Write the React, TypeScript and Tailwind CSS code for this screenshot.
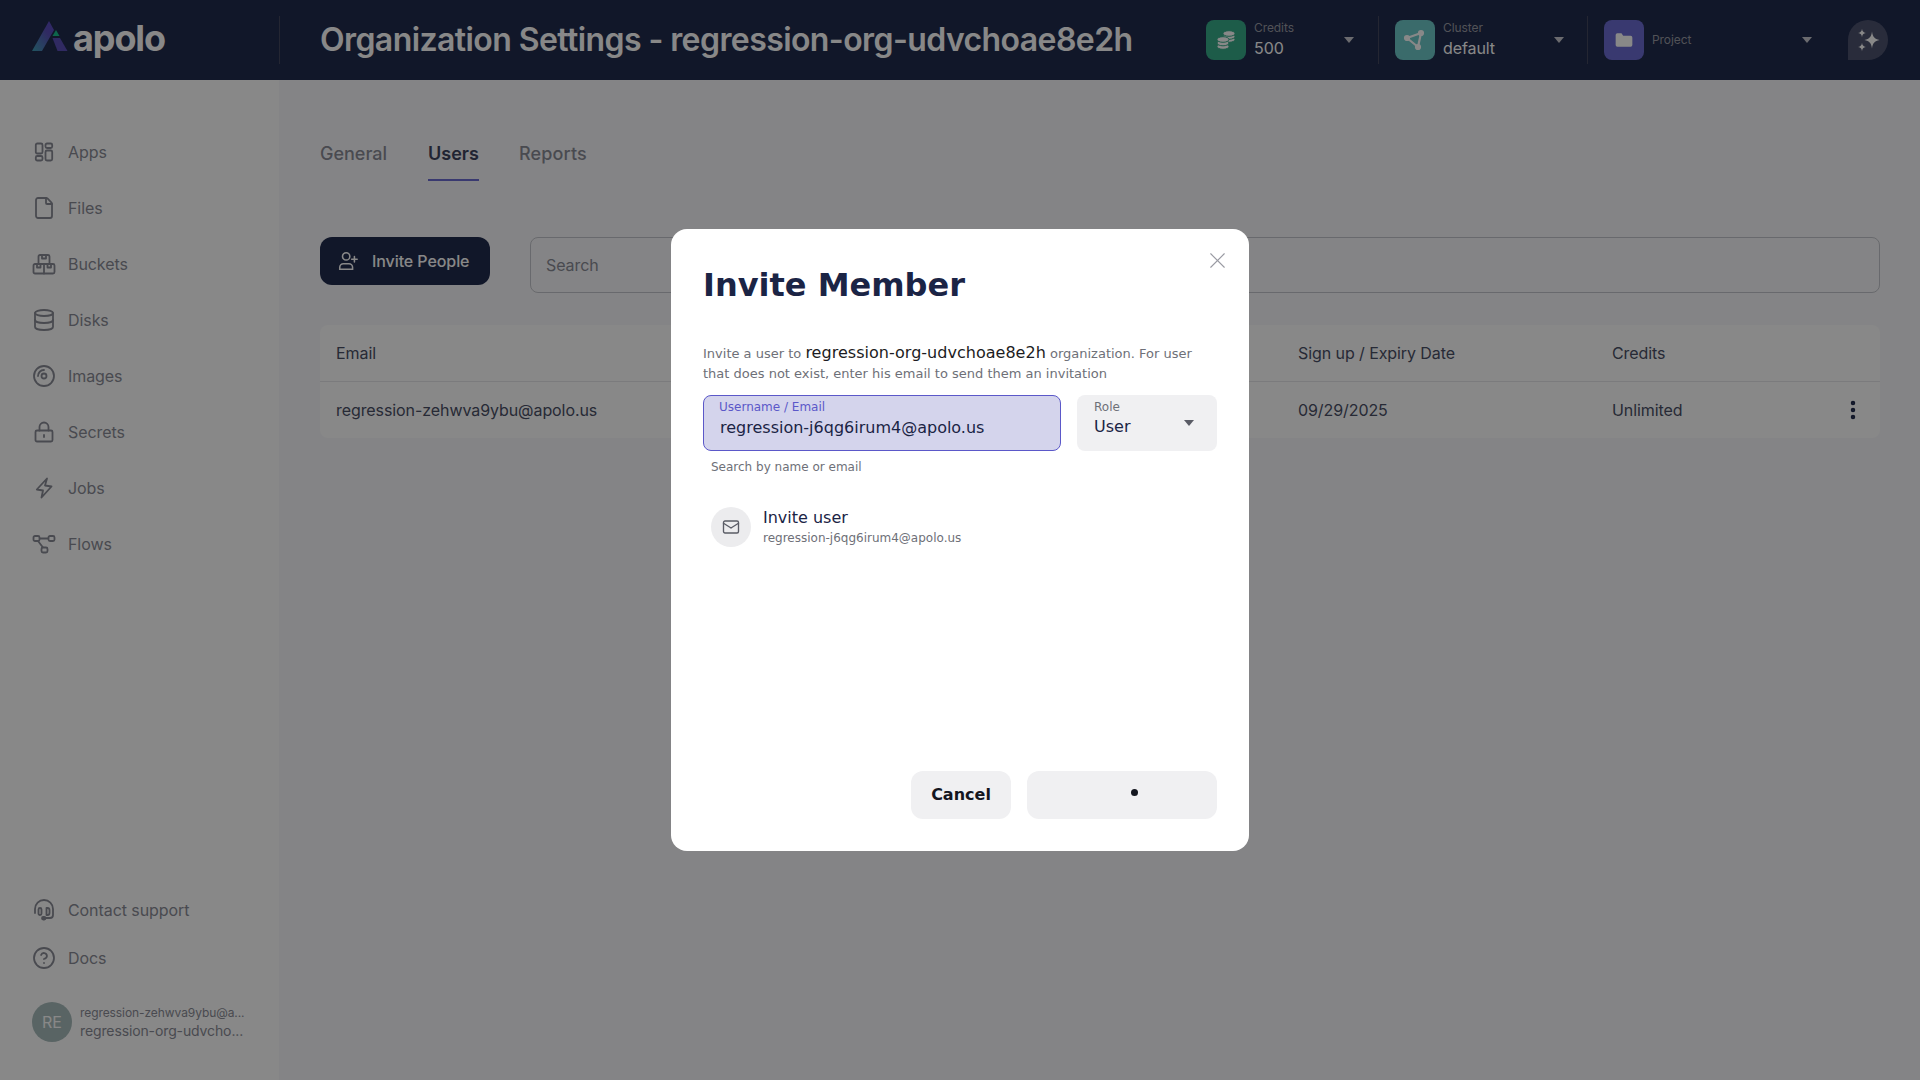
import React from "react";
import { CircleHelp, Database, EllipsisVertical, File, Mail, X } from "lucide-react";

function AppsIcon() {
  return (
    <svg width="24" height="24" viewBox="0 0 24 24" fill="none" stroke="currentColor" strokeWidth="1.8" strokeLinejoin="round">
      <rect x="3.800" y="3.500" width="6.700" height="10" rx="1.500" />
      <rect x="3.800" y="16" width="6.700" height="4.500" rx="1.500" />
      <rect x="13.500" y="3.500" width="6.700" height="4.500" rx="1.500" />
      <rect x="13.500" y="10.500" width="6.700" height="10" rx="1.500" />
    </svg>
  );
}

function BucketsIcon() {
  return (
    <svg width="24" height="24" viewBox="0 0 24 24" fill="none" stroke="currentColor" strokeWidth="1.8" strokeLinecap="round" strokeLinejoin="round">
      <path d="M6.500 12V4.500A1.500 1.500 0 0 1 8 3h8a1.500 1.500 0 0 1 1.500 1.500V12" />
      <path d="M10 3v3.500h4V3" />
      <path d="M1.500 13.500A1.500 1.500 0 0 1 3 12h9v9.500H3a1.500 1.500 0 0 1-1.500-1.500z" />
      <path d="M12 12h9a1.500 1.500 0 0 1 1.500 1.500V20a1.500 1.500 0 0 1-1.500 1.500h-9" />
      <path d="M5 12v3.500h3.500V12M15.500 12v3.500H19V12" />
    </svg>
  );
}

function ImagesIcon() {
  return (
    <svg width="24" height="24" viewBox="0 0 24 24" fill="none" stroke="currentColor" strokeWidth="1.8" strokeLinecap="round">
      <circle cx="12" cy="12" r="10" />
      <circle cx="12" cy="12" r="2.500" />
      <path d="M6 12a6 6 0 0 1 6-6" />
    </svg>
  );
}

function LockIcon() {
  return (
    <svg width="24" height="24" viewBox="0 0 24 24" fill="none" stroke="currentColor" strokeWidth="1.8" strokeLinecap="round" strokeLinejoin="round">
      <rect x="3.500" y="10.500" width="17" height="11" rx="1.500" />
      <path d="M7.500 10.500V7a4.500 4.500 0 0 1 9 0v3.500M12 15v2" />
    </svg>
  );
}

function BoltIcon() {
  return (
    <svg width="24" height="24" viewBox="0 0 24 24" fill="none" stroke="currentColor" strokeWidth="1.8" strokeLinejoin="round">
      <path d="M15 2.500L13 9.500L19.500 10.500L9.500 21.500L11 14.500L4.800 13.500Z" />
    </svg>
  );
}

function FlowsIcon() {
  return (
    <svg width="24" height="24" viewBox="0 0 24 24" fill="none" stroke="currentColor" strokeWidth="1.8" strokeLinejoin="round">
      <rect x="1.500" y="4" width="6" height="5" rx="1.500" />
      <rect x="16.500" y="4" width="6" height="5" rx="1.500" />
      <rect x="9.500" y="15.500" width="6" height="5" rx="1.500" />
      <path d="M7.500 6.500h9M6 9l5 6.500" />
    </svg>
  );
}

function SupportIcon() {
  return (
    <svg width="24" height="24" viewBox="0 0 24 24" fill="none" stroke="currentColor" strokeWidth="1.8" strokeLinecap="round" strokeLinejoin="round">
      <path d="M3 15v-4a9 9 0 0 1 18 0v6a3 3 0 0 1-3 3h-5" />
      <rect x="6.500" y="10" width="3" height="7" rx="1.500" />
      <path d="M14.500 10h1a2 2 0 0 1 2 2v3a2 2 0 0 1-2 2h-1z" />
      <rect x="10" y="19" width="3.500" height="2.500" rx="1.200" fill="currentColor" />
    </svg>
  );
}

function CoinsIcon() {
  return (
    <svg width="24" height="24" viewBox="0 0 24 24" fill="white" stroke="#38ac8a" strokeWidth="1">
      <ellipse cx="15" cy="11.500" rx="6" ry="2.800" />
      <ellipse cx="15" cy="8.500" rx="6" ry="2.800" />
      <ellipse cx="15" cy="5.500" rx="6" ry="2.800" />
      <ellipse cx="9" cy="18.500" rx="6" ry="2.800" />
      <ellipse cx="9" cy="15" rx="6" ry="2.800" />
      <ellipse cx="9" cy="11.500" rx="6" ry="2.800" />
    </svg>
  );
}

function ClusterIcon() {
  return (
    <svg width="24" height="24" viewBox="0 0 24 24" fill="white" stroke="white" strokeWidth="2.200" strokeLinejoin="round">
      <path d="M4 10L18 5L15 19Z" fill="none" />
      <circle cx="4" cy="10" r="2" />
      <circle cx="18" cy="5" r="2" />
      <circle cx="15" cy="19" r="2" />
    </svg>
  );
}

function SparkIcon() {
  return (
    <svg width="24" height="24" viewBox="0 0 24 24" fill="white">
      <path d="M16 3.500c.6 5 2.500 7.600 7.500 8.500-5 .9-6.900 3.500-7.500 8.500-.6-5-2.500-7.600-7.500-8.500 5-.9 6.900-3.500 7.500-8.500z" />
      <path d="M6 .8c.3 2.500 1.300 3.700 3.800 4.200-2.500.5-3.500 1.700-3.800 4.200-.3-2.500-1.300-3.700-3.800-4.200 2.500-.5 3.500-1.700 3.800-4.200z" />
      <path d="M6 14.800c.3 2.500 1.300 3.700 3.800 4.200-2.500.5-3.500 1.700-3.800 4.200-.3-2.500-1.300-3.700-3.800-4.200 2.500-.5 3.500-1.700 3.800-4.200z" />
    </svg>
  );
}

function Logo() {
  return (
    <div className="flex items-center">
      <svg width="36" height="30" viewBox="0 0 36 30" className="mb-[8px]">
        <defs>
          <linearGradient id="apolo-a" x1="0" y1="1" x2="1" y2="0">
            <stop offset="0" stopColor="#3f9fb4" />
            <stop offset="0.65" stopColor="#5a4fb8" />
            <stop offset="1" stopColor="#5c4ac4" />
          </linearGradient>
        </defs>
        <path d="M17 0L22 9L10 30H0Z" fill="url(#apolo-a)" />
        <path d="M20.500 17H28L35.500 30H25.500Z" fill="#5a4fb8" />
        <path d="M24 9L27.500 15H20.500Z" fill="#1bc08f" />
      </svg>
      <span className="mb-[4px] ml-[5px] text-[36px] leading-none font-bold tracking-[-1.100px] text-white">apolo</span>
    </div>
  );
}

function Selector({ color, icon, label, value, width, caret, last }: { color: string; icon: React.ReactNode; label: string; value?: string; width: string; caret: string; last?: boolean }) {
  return (
    <div className={`flex h-full items-center ${width}`}>
      <div className={`flex h-10 w-10 shrink-0 items-center justify-center rounded-lg ${color}`}>{icon}</div>
      <div className="ml-2 flex flex-col justify-center">
        <span className="text-xs leading-[16px] text-[#9a9ba3]">{label}</span>
        {value && <span className="text-base leading-[24px] text-white">{value}</span>}
      </div>
      <span className={`ml-auto h-0 w-0 border-x-[5px] border-t-[6px] border-x-transparent border-t-[#c8c9d0] ${caret}`} />
      {!last && <span className="h-12 w-px bg-[#45485f]" />}
    </div>
  );
}

const navItems = [
  { label: "Apps", icon: <AppsIcon /> },
  { label: "Files", icon: <File size={24} strokeWidth={1.8} /> },
  { label: "Buckets", icon: <BucketsIcon /> },
  { label: "Disks", icon: <Database size={24} strokeWidth={1.8} /> },
  { label: "Images", icon: <ImagesIcon /> },
  { label: "Secrets", icon: <LockIcon /> },
  { label: "Jobs", icon: <BoltIcon /> },
  { label: "Flows", icon: <FlowsIcon /> },
];

function NavItem({ label, icon, height }: { label: string; icon: React.ReactNode; height: string }) {
  return (
    <div className={`flex items-center gap-3 text-base text-[#8a8c96] ${height}`}>
      <span className="flex h-6 w-6 items-center justify-center">{icon}</span>
      <span>{label}</span>
    </div>
  );
}

function InviteDialog() {
  return (
    <div className="fixed inset-0 flex items-center justify-center bg-black/[.465]">
      <div className="relative flex h-[622px] w-[578px] flex-col rounded-2xl bg-white px-8 pt-[33px] pb-8 tracking-normal [font-family:'DejaVu_Sans',sans-serif]">
        <X size={27} strokeWidth={1} className="absolute top-[18px] right-[18px] text-[#9a9ba3]" />
        <h2 className="text-[32px] leading-[46px] font-bold text-[#1b2445]">Invite Member</h2>
        <p className="mt-[36px] text-[13px] leading-[20px] text-[#6e7078]">
          Invite a user to <span className="text-base leading-none tracking-[0.02px] text-[#1c1c22]">regression-org-udvchoae8e2h</span> organization. For user that does not exist, enter his email to send them an invitation
        </p>
        <div className="mt-[11px] flex gap-4">
          <label className="flex h-14 w-[358px] flex-col rounded-lg border border-[#5b58c9] bg-[#d4d4ec] px-[15px] pt-[3px]">
            <span className="text-xs leading-[16px] text-[#5b58c9]">Username / Email</span>
            <input readOnly value="regression-j6qg6irum4@apolo.us" className="mt-[1px] w-full bg-transparent pl-[1px] text-base leading-[24px] text-[#1b2445] outline-none" />
          </label>
          <div className="relative flex h-14 w-[140px] flex-col rounded-lg bg-[#f0f0f2] px-[17px] pt-[4px]">
            <span className="text-xs leading-[16px] text-[#6e7078]">Role</span>
            <span className="text-base leading-[24px] text-[#1b2445]">User</span>
            <span className="absolute top-[25px] right-[23px] h-0 w-0 border-x-[5.500px] border-t-[6px] border-x-transparent border-t-[#5a5c66]" />
          </div>
        </div>
        <p className="mt-[8px] ml-2 text-xs leading-[16px] text-[#6e7078]">Search by name or email</p>
        <div className="mt-[32px] ml-2 flex items-center gap-3">
          <div className="flex h-10 w-10 items-center justify-center rounded-full bg-[#ececee]">
            <Mail size={18} strokeWidth={1.8} className="text-[#5a5c66]" />
          </div>
          <div className="flex flex-col">
            <span className="text-base leading-[22px] text-[#1b2445]">Invite user</span>
            <span className="text-xs leading-[18px] text-[#6e7078]">regression-j6qg6irum4@apolo.us</span>
          </div>
        </div>
        <div className="mt-auto flex justify-end gap-4">
          <button className="h-12 w-[100px] rounded-xl bg-[#f0f0f2] text-base font-bold text-[#14161f]">Cancel</button>
          <button className="flex h-12 w-[190px] items-start justify-center rounded-xl bg-[#f0f0f2] pt-[18px] pl-[24px]">
            <span className="h-[7px] w-[7px] rounded-full bg-[#14161f]" />
          </button>
        </div>
      </div>
    </div>
  );
}

export default function App() {
  return (
    <div className="flex h-screen w-full flex-col overflow-hidden bg-white font-[Inter,sans-serif] tracking-[-0.08px]">
      <header className="flex h-20 shrink-0 items-center bg-[#202b4d]">
        <div className="flex h-12 w-[280px] shrink-0 items-center border-r border-[#45485f] pl-8">
          <Logo />
        </div>
        <h1 className="ml-10 w-[886px] shrink-0 text-[32px] leading-none font-semibold tracking-[-0.58px] whitespace-nowrap text-white">Organization Settings - regression-org-udvchoae8e2h</h1>
        <Selector width="w-[173px]" caret="mr-[24px]" color="bg-[#38ac8a]" label="Credits" value="500" icon={<CoinsIcon />} />
        <div className="w-4" />
        <Selector width="w-[193px]" caret="mr-[23px]" color="bg-[#6dc8c8]" label="Cluster" value="default" icon={<ClusterIcon />} />
        <div className="w-4" />
        <Selector width="w-[220px]" caret="mr-[12px]" last color="bg-[#6c6cd2]" label="Project" icon={
          <svg width="20" height="20" viewBox="0 0 24 24" fill="white"><path d="M2 6a2 2 0 0 1 2-2h5l2 3h9a2 2 0 0 1 2 2v9a2 2 0 0 1-2 2H4a2 2 0 0 1-2-2z" /></svg>
        } />
        <div className="ml-6 flex h-10 w-10 items-center justify-center rounded-t-full rounded-br-full bg-[#4e5470]">
          <SparkIcon />
        </div>
      </header>

      <div className="flex min-h-0 flex-1">
        <aside className="flex w-[279px] shrink-0 flex-col bg-white pt-[44px] pb-[38px] pl-8">
          {navItems.map((item) => (
            <NavItem key={item.label} label={item.label} icon={item.icon} height="h-14" />
          ))}
          <div className="mt-auto">
            <NavItem label="Contact support" icon={<SupportIcon />} height="h-12" />
            <NavItem label="Docs" icon={<CircleHelp size={24} strokeWidth={1.8} />} height="h-12" />
            <div className="mt-5 flex items-center gap-2">
              <div className="flex h-10 w-10 items-center justify-center rounded-full bg-[#a8bcbc] text-base text-white">RE</div>
              <div className="flex flex-col text-[#8a8c96]">
                <span className="text-xs leading-[18px]">regression-zehwva9ybu@a...</span>
                <span className="text-sm leading-[18px] tracking-[-0.12px]">regression-org-udvcho...</span>
              </div>
            </div>
          </div>
        </aside>

        <main className="flex-1 bg-[#f8f8fb] pt-[45px] pr-10 pl-[41px]">
          <div className="flex gap-10 text-lg font-medium tracking-normal text-[#8a8c96]">
            <span className="h-[56px] pt-4 pr-[1px] leading-[26px]">General</span>
            <span className="h-[56px] border-b-2 border-[#6c6cd2] pt-4 leading-[26px] font-semibold text-[#3f4560]">Users</span>
            <span className="h-[56px] pt-4 leading-[26px] tracking-[0.15px]">Reports</span>
          </div>
          <div className="mt-[56px] flex items-start gap-10">
            <button className="flex h-12 w-[170px] items-center gap-[13px] rounded-xl bg-[#202b4d] pl-[17px] text-base font-medium text-white">
              <svg width="22" height="22" viewBox="0 0 24 24" fill="none" stroke="currentColor" strokeWidth="1.7" strokeLinecap="round">
                <circle cx="10" cy="7" r="4" />
                <path d="M3 21v-2a4 4 0 0 1 4-4h6a4 4 0 0 1 4 4v2zM19 7v6M16 10h6" />
              </svg>
              Invite People
            </button>
            <div className="flex h-14 flex-1 items-center rounded-lg border border-[#c4c6cc] pl-[15px] text-base text-[#8a8c96]">Search</div>
          </div>
          <div className="mt-8 rounded-lg bg-white text-base text-[#4a4f66]">
            <div className="grid h-[57px] grid-cols-[962px_314px_1fr] items-center border-b border-[#e6e6ea] pl-4">
              <span>Email</span>
              <span>Sign up / Expiry Date</span>
              <span>Credits</span>
            </div>
            <div className="grid h-14 grid-cols-[962px_314px_1fr] items-center pl-4">
              <span>regression-zehwva9ybu@apolo.us</span>
              <span>09/29/2025</span>
              <span className="flex items-center justify-between pr-[15px]">
                Unlimited
                <EllipsisVertical size={24} strokeWidth={2.500} className="text-[#202b4d]" />
              </span>
            </div>
          </div>
        </main>
      </div>

      <InviteDialog />
    </div>
  );
}
